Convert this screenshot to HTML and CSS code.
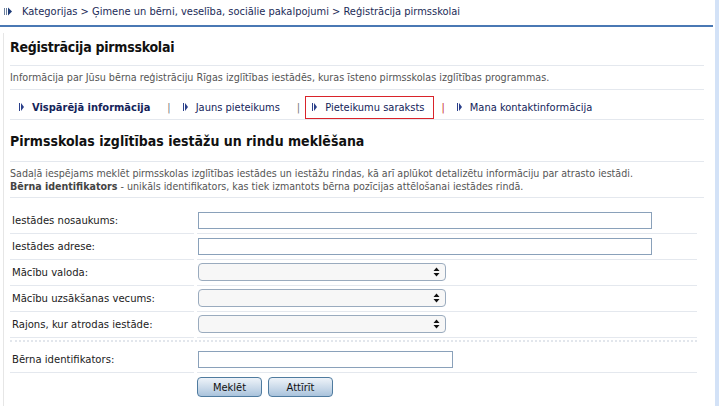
FILE: index.html
```html
<!DOCTYPE html>
<html lang="lv">
<head>
<meta charset="utf-8">
<link rel="stylesheet" href="styles.css">
</head>
<body>
<div class="page">
  <div class="crumb">
    <svg class="crumb-icon" width="8" height="9" viewBox="0 0 8 9"><rect x="0" y="1" width="1" height="7" fill="#6b7f9c"/><rect x="2" y="1" width="1" height="7" fill="#6b7f9c"/><path d="M4 0.5 L8 4.5 L4 8.5 Z" fill="#1d3b78"/></svg>
    <span>Kategorijas &gt; Ģimene un bērni, veselība, sociālie pakalpojumi &gt; Reģistrācija pirmsskolai</span>
  </div>
  <div class="panel">
    <h1 class="title title-top">Reģistrācija pirmsskolai</h1>
    <p class="intro">Informācija par Jūsu bērna reģistrāciju Rīgas izglītības iestādēs, kuras īsteno pirmsskolas izglītības programmas.</p>
    <nav class="tabs">
      <a class="tab tab-active"><svg class="arrow" width="5" height="8" viewBox="0 0 5 8"><rect x="0" y="0" width="1" height="8" fill="#2a3f8a"/><path d="M2 0 L5 4 L2 8 Z" fill="#2a3f8a"/></svg>Vispārējā informācija</a>
      <span class="sep">|</span>
      <a class="tab"><svg class="arrow" width="5" height="8" viewBox="0 0 5 8"><rect x="0" y="0" width="1" height="8" fill="#2a3f8a"/><path d="M2 0 L5 4 L2 8 Z" fill="#2a3f8a"/></svg>Jauns pieteikums</a>
      <span class="sep">|</span>
      <a class="tab tab-boxed"><svg class="arrow" width="5" height="8" viewBox="0 0 5 8"><rect x="0" y="0" width="1" height="8" fill="#2a3f8a"/><path d="M2 0 L5 4 L2 8 Z" fill="#2a3f8a"/></svg>Pieteikumu saraksts</a>
      <span class="sep sep-red">|</span>
      <a class="tab"><svg class="arrow" width="5" height="8" viewBox="0 0 5 8"><rect x="0" y="0" width="1" height="8" fill="#2a3f8a"/><path d="M2 0 L5 4 L2 8 Z" fill="#2a3f8a"/></svg>Mana kontaktinformācija</a>
    </nav>
    <h2 class="title title-section">Pirmsskolas izglītības iestāžu un rindu meklēšana</h2>
    <p class="desc">Sadaļā iespējams meklēt pirmsskolas izglītības iestādes un iestāžu rindas, kā arī aplūkot detalizētu informāciju par atrasto iestādi.<br><b>Bērna identifikators</b> - unikāls identifikators, kas tiek izmantots bērna pozīcijas attēlošanai iestādes rindā.</p>
    <form class="form">
      <div class="row row-first"><label class="lbl">Iestādes nosaukums:</label><div class="fld"><input class="txt txt-wide" type="text"></div></div>
      <div class="row"><label class="lbl">Iestādes adrese:</label><div class="fld"><input class="txt txt-wide" type="text"></div></div>
      <div class="row"><label class="lbl">Mācību valoda:</label><div class="fld"><span class="sel"><svg class="spin" width="7" height="10" viewBox="0 0 7 10"><path d="M3.5 0.5 L6.5 4 L0.5 4 Z M0.5 6 L6.5 6 L3.5 9.5 Z" fill="#111"/></svg></span></div></div>
      <div class="row"><label class="lbl">Mācību uzsākšanas vecums:</label><div class="fld"><span class="sel"><svg class="spin" width="7" height="10" viewBox="0 0 7 10"><path d="M3.5 0.5 L6.5 4 L0.5 4 Z M0.5 6 L6.5 6 L3.5 9.5 Z" fill="#111"/></svg></span></div></div>
      <div class="row"><label class="lbl">Rajons, kur atrodas iestāde:</label><div class="fld"><span class="sel"><svg class="spin" width="7" height="10" viewBox="0 0 7 10"><path d="M3.5 0.5 L6.5 4 L0.5 4 Z M0.5 6 L6.5 6 L3.5 9.5 Z" fill="#111"/></svg></span></div></div>
      <div class="dotted"></div>
      <div class="row"><label class="lbl">Bērna identifikators:</label><div class="fld"><input class="txt txt-id" type="text"></div></div>
      <div class="buttons"><button type="button" class="btn">Meklēt</button><button type="button" class="btn">Attīrīt</button></div>
    </form>
  </div>
</div>
</body>
</html>
```

FILE: styles.css
```css
* { box-sizing: border-box; }
html, body { margin: 0; padding: 0; background: #fff; }
body {
  font-family: "DejaVu Sans Condensed", "Liberation Sans", sans-serif;
  font-size: 11px;
  color: #222;
  width: 724px;
  height: 406px;
  overflow: hidden;
}
.page {
  width: 719px;
  height: 406px;
  border-right: 4px solid #d3e2f7;
}
.crumb {
  height: 27px;
  display: flex;
  align-items: center;
  padding: 0 0 2px 4px;
  border-bottom: 2px solid #4a78b4;
  width: 713px;
  color: #1c2b58;
}
.crumb-icon { margin-right: 10px; }
.panel {
  margin: 6px 0 0 3px;
  border-left: 1px solid #e6e6e6;
  padding: 0 11px 0 6px;
  height: 380px;
}
.title {
  margin: 0;
  font-size: 14px;
  font-weight: bold;
  color: #111;
  height: 33px;
  line-height: 29px;
  border-bottom: 1px solid #e4e8ee;
}
.title-top { letter-spacing: -0.25px; }
.intro {
  margin: 0;
  height: 24px;
  line-height: 24px;
  font-size: 10.7px;
  color: #555;
  border-bottom: 1px solid #e4e8ee;
}
.tabs {
  display: flex;
  align-items: center;
  height: 30px;
  padding: 5px 0 0 2px;
  border-bottom: 1px solid #e4e8ee;
  font-size: 11px;
}
.tab {
  display: flex;
  align-items: center;
  color: #14245a;
  height: 23px;
  padding: 0 9px 0 6px;
  border: 1px solid transparent;
}
.tab-active { font-weight: bold; }
.tab-boxed { border-color: #d9232a; }
.arrow { margin-right: 8px; }
.sep { color: #777; padding: 0 5px 0 7px; }
.sep-red { color: #c8302f; }
.title-section {
  height: 42px;
  line-height: 42px;
}
.desc {
  margin: 0;
  padding: 5px 0 0;
  height: 36px;
  line-height: 13px;
  font-size: 10.6px;
  color: #555;
  border-bottom: 1px solid #e4e8ee;
}
.desc b { color: #444; }
.form { width: 687px; }
.row {
  display: grid;
  grid-template-columns: 184px 1fr;
  column-gap: 3px;
  height: 26px;
}
.row-first { height: 36px; }
.lbl, .fld {
  display: flex;
  align-items: flex-end;
  border-bottom: 1px solid #e4e8ee;
  padding-bottom: 4px;
}
.lbl { font-size: 11.2px; color: #222; padding-left: 2px; padding-bottom: 6px; }
.txt {
  display: block;
  height: 17px;
  border: 1px solid #8aa1ba;
  margin: 0 0 0 1px;
  padding: 0;
  background: #fff;
}
.txt-wide { width: 454px; }
.txt-id { width: 255px; }
.sel {
  position: relative;
  display: block;
  width: 248px;
  height: 18px;
  margin-left: 1px;
  border: 1px solid #9aabbe;
  border-radius: 4px;
  background: #f7f7f7;
}
.spin { position: absolute; right: 5px; top: 3px; }
.dotted {
  height: 7px;
  border-top: 2px dotted #e2e6ec;
  margin-top: 2px;
}
.buttons {
  display: flex;
  gap: 6px;
  padding: 4px 0 0 187px;
}
.btn {
  width: 65px;
  height: 20px;
  border: 1px solid #4f7b9f;
  border-radius: 4px;
  background: linear-gradient(#eef3f9, #c6d7e8 60%, #a9c3dc);
  font-family: "DejaVu Sans Condensed", "Liberation Sans", sans-serif;
  font-size: 11px;
  color: #111;
  padding: 0;
}
```
